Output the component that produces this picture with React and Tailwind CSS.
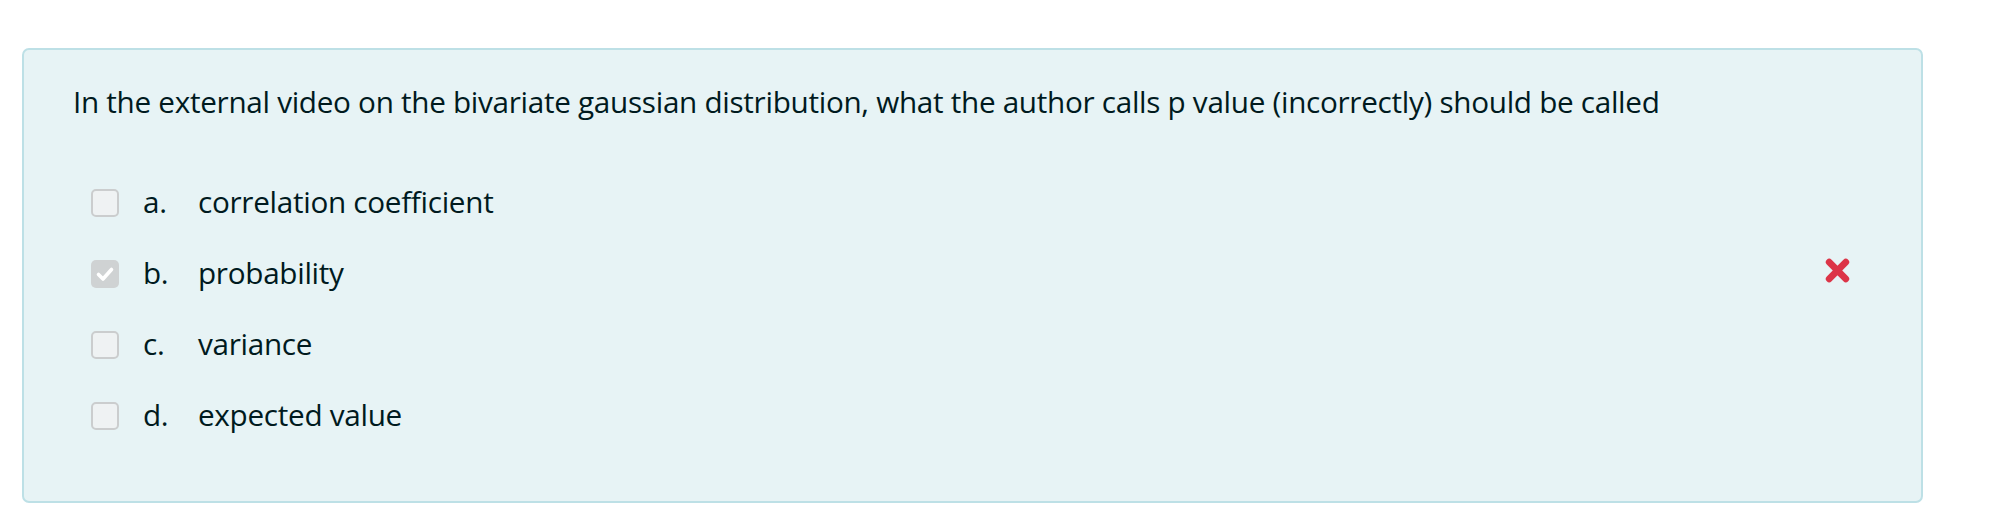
import React from 'react';

const answers = [
    { key: 'a.', text: 'correlation coefficient', checked: false },
    { key: 'b.', text: 'probability', checked: true, wrong: true },
    { key: 'c.', text: 'variance', checked: false },
    { key: 'd.', text: 'expected value', checked: false },
];

const CheckBox = ({ checked }) => (
    checked ? (
        <span className="flex items-center justify-center w-[28px] h-[28px] rounded-[5px] bg-[#cfd2d3] shrink-0">
            <svg width="20" height="20" viewBox="0 0 20 20">
                <path d="M3.5 10.5 L8 15 L16.5 5.5" fill="none" stroke="#ffffff" strokeWidth="3.6" strokeLinecap="round" strokeLinejoin="round" />
            </svg>
        </span>
    ) : (
        <span className="block w-[28px] h-[28px] rounded-[5px] border-2 border-[#cbcdce] bg-[#eff2f3] shrink-0"></span>
    )
);

const WrongIcon = () => (
    <svg width="27" height="27" viewBox="0 0 26 26">
        <path d="M5 5 L21 21 M21 5 L5 21" stroke="#dc3447" strokeWidth="6.5" strokeLinecap="round" fill="none" />
    </svg>
);

const App = () => {
    return (
        <div className="w-[1995px] h-[526px] bg-white pt-[48px] pl-[22px] font-['Open_Sans','Noto_Sans',sans-serif] text-[#001a1e]">
            <div className="w-[1901px] h-[455px] bg-[#e7f3f5] border-2 border-[#bde0e6] rounded-[7px] pl-[49px] pr-[70px]">
                {/* Question text */}
                <div className="pt-[32px] h-[117px] text-[29.7px] leading-[40px] tracking-[-0.01em]">
                    In the external video on the bivariate gaussian distribution, what the author calls p value (incorrectly) should be called
                </div>

                {/* Answers */}
                <div className="pl-[18px]">
                    {answers.map(ans => (
                        <div key={ans.key} className="flex items-center h-[71px]">
                            <CheckBox checked={ans.checked} />
                            <span className="ml-[24px] w-[55px] text-[29.7px] tracking-[-0.01em]">{ans.key}</span>
                            <span className="flex-1 text-[29.7px] tracking-[-0.01em]">{ans.text}</span>
                            {ans.wrong && (
                                <span className="mb-[6px]"><WrongIcon /></span>
                            )}
                        </div>
                    ))}
                </div>
            </div>
        </div>
    );
};

export default App;
